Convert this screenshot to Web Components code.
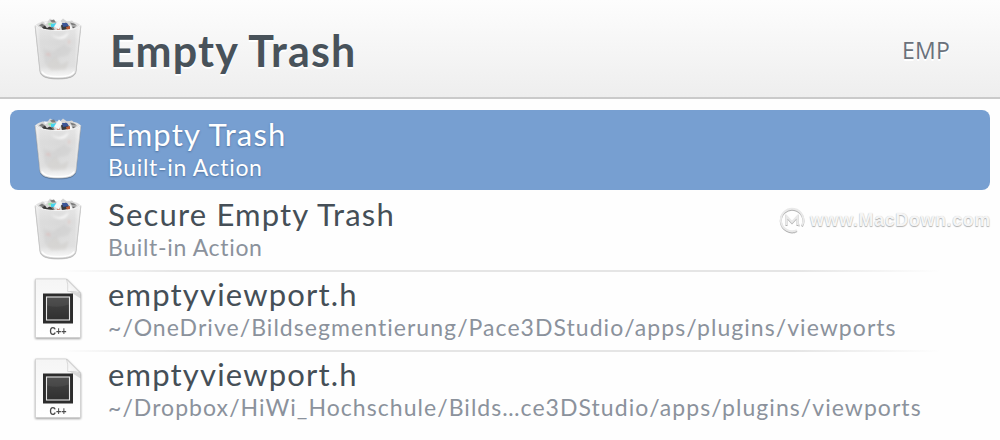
<!DOCTYPE html>
<html lang="en">
<head>
<meta charset="utf-8">
<title>Launcher</title>
<style>
    body {
        margin: 0;
        background: #fefefe;
        font-family: Lato, "Open Sans", sans-serif;
    }
</style>
</head>
<body>
<launcher-window></launcher-window>

<script>
class TrashIcon extends HTMLElement {
    constructor() {
        super();
        this.attachShadow({ mode: 'open' });
    }

    connectedCallback() {
        this.shadowRoot.innerHTML = `
        <style>
            :host { display: block; width: 50px; height: 64px; }
            svg { display: block; filter: drop-shadow(0 1px .7px rgba(0, 0, 0, .25)); }
        </style>
        <svg width="50" height="64" viewBox="0 1.500 50 64">
            <defs>
                <linearGradient id="side" x1="0" x2="1" y1="0" y2="0">
                    <stop offset="0" stop-color="#f0f0f0"/>
                    <stop offset=".12" stop-color="#dcdcdc"/>
                    <stop offset=".5" stop-color="#d9d9d9"/>
                    <stop offset=".86" stop-color="#dddddd"/>
                    <stop offset="1" stop-color="#f2f2f2"/>
                </linearGradient>
                <linearGradient id="glow" x1="0" x2="0" y1="0" y2="1">
                    <stop offset="0" stop-color="#fff" stop-opacity=".3"/>
                    <stop offset=".3" stop-color="#fff" stop-opacity="0"/>
                    <stop offset=".78" stop-color="#fff" stop-opacity=".1"/>
                    <stop offset="1" stop-color="#fff" stop-opacity=".9"/>
                </linearGradient>
                <filter id="soft"><feGaussianBlur stdDeviation="1.1"/></filter>
                <filter id="smudge"><feGaussianBlur stdDeviation=".35"/></filter>
            </defs>
            <!-- crumpled paper -->
            <path d="M2.200 9Q5 5.500 12 5h26q7 .5 9.800 4-3 5-22.800 5T2.200 9z" fill="#e2e2e2"/>
            <g filter="url(#smudge)">
                <path d="M5 9 9 5l5 1 3-4 5 3 4 1 4-4 4 3 5-1 3 3 2 3-3 4-8 2H13L6 12z" fill="#d6d6d6"/>
                <path d="m6 9 3-2 3 2-2 2zM17 4l4-1 2 3-4 0zM15 11l5-1 2 4-6 0zM37 6l4 1 3 2-5 0z" fill="#7c7c7c"/>
                <path d="m9 11 3-2 3 4-4 0zM13 12l4-2 4 4h-7zM28 9l5-3 4 6-8 2z" fill="#3a3a3a"/>
                <path d="m15 7 4-1 1 3-4 0z" fill="#9ae2a4"/>
                <path d="m18 7.500 6-1-2 4h-4z" fill="#45d3ee"/>
                <path d="m29 6.500 5 0 2 3-6 1z" fill="#3b5496"/>
                <path d="m25 9 1-2 1 6-3 1z" fill="#cc7458"/>
                <path d="m33 10.500 4-1 1 3-4 1z" fill="#bb5c38"/>
                <path d="m21 10 5-7 3 3-3 7zM11 5l4 1-3 2zM37 8l3 4-3 1z" fill="#f6f6f6"/>
                <path d="m39 10 4 0-3 2z" fill="#606060"/>
            </g>
            <!-- basket -->
            <path d="M2.200 9C5 12.500 14 14 25 14s20-1.500 22.800-5L43 54c-.6 5-6.500 7.500-18 7.500S7.600 59 7 54z" fill="url(#side)"/>
            <path d="M2.200 9C5 12.500 14 14 25 14s20-1.500 22.800-5L43 54c-.6 5-6.500 7.500-18 7.500S7.600 59 7 54z" fill="url(#glow)"/>
            <g filter="url(#soft)">
                <path d="M18 18c7 4 13 3 18-3-2 9-11 10-18 3z" fill="#fff" opacity=".75"/>
                <path d="m10 32 10 3 11-7 8 4-4 7-11 2-12 7z" fill="#c4c4c4" opacity=".3"/>
                <path d="m13 48 10-8 5 8 8-4-3 9-15 1z" fill="#cbc7c2" opacity=".4"/>
                <path d="m12 38 4-2 2 4z" fill="#e5aaa5" opacity=".4"/>
                <path d="m35 23 3 2-3 3z" fill="#e8b0aa" opacity=".35"/>
            </g>
            <path d="M2.800 8.500C5 12.500 14 14 25 14s20-1.500 22.200-5.500" fill="none" stroke="#f6f6f6" stroke-width="1"/>
            <path d="M9 55c1.500 4 7 5.400 16 5.400S39.500 59 41 55" fill="none" stroke="#fff" stroke-width="1.600" opacity=".9"/>
            <path d="M2.200 9 7 54c.6 5 6.500 7.500 18 7.500S42.400 59 43 54L47.800 9" fill="none" stroke="#c2c2c2" stroke-width=".7"/>
        </svg>
        `;
    }
}

class HeaderFileIcon extends HTMLElement {
    constructor() {
        super();
        this.attachShadow({ mode: 'open' });
    }

    connectedCallback() {
        this.shadowRoot.innerHTML = `
        <style>
            :host { display: block; width: 50px; height: 64px; }
            svg { display: block; filter: drop-shadow(0 1px 1px rgba(0, 0, 0, .4)); }
            text { font: bold 10px "Liberation Sans", sans-serif; fill: #4c4c4c; }
        </style>
        <svg width="50" height="64" viewBox="0 1.500 50 64">
            <defs>
                <linearGradient id="sheet" x1="0" x2="0" y1="0" y2="1">
                    <stop offset="0" stop-color="#f5f5f5"/>
                    <stop offset="1" stop-color="#fff"/>
                </linearGradient>
                <linearGradient id="fold" x1="0" x2="1" y1="1" y2="0">
                    <stop offset="0" stop-color="#fff"/>
                    <stop offset=".45" stop-color="#f2f2f2"/>
                    <stop offset=".6" stop-color="#bdbdbd"/>
                </linearGradient>
                <linearGradient id="panel" x1="0" x2="0" y1="0" y2="1">
                    <stop offset="0" stop-color="#454545"/>
                    <stop offset="1" stop-color="#303030"/>
                </linearGradient>
            </defs>
            <path d="M2.500 2.500h31l14 14v44.500h-45z" fill="url(#sheet)" stroke="#cfcfcf" stroke-width=".7"/>
            <path d="m35 14 12.500 3v5z" fill="#000" opacity=".12"/>
            <rect x="10" y="17" width="30" height="30" fill="#2c2c2c"/>
            <rect x="13.500" y="20.500" width="23" height="23" fill="url(#panel)" stroke="#e6e6e6" stroke-width="1.100"/>
            <path d="M14 21h22v7q-11 4-22 1z" fill="#fff" opacity=".06"/>
            <path d="M33.500 2.500q1.800 5 1.200 12.500 7-.8 12.800 1.500z" fill="url(#fold)" stroke="#bcbcbc" stroke-width=".5"/>
            <text x="16.500" y="58.500" textLength="17" lengthAdjust="spacingAndGlyphs">C++</text>
        </svg>
        `;
    }
}

class SearchHeader extends HTMLElement {
    constructor() {
        super();
        this.attachShadow({ mode: 'open' });
    }

    connectedCallback() {
        this.shadowRoot.innerHTML = `
        <style>
            :host {
                display: flex;
                align-items: center;
                box-sizing: border-box;
                height: 99px;
                padding: 3px 50px 0 33px;
                border-bottom: 2px solid #cacaca;
                background: linear-gradient(#fdfdfd, #eeeeee);
                color: #48525a;
                text-shadow: 0 2px 0 #fff;
            }
            .title {
                flex: 1;
                margin-left: 27px;
                padding-top: 2px;
                font-size: 43px;
                font-weight: 700;
                line-height: 60px;
                letter-spacing: 1.200px;
            }
            .query {
                padding-bottom: 1px;
                font: 400 23px/30px "Open Sans", sans-serif;
                letter-spacing: .2px;
                color: #6a717b;
            }
        </style>
        <slot name="icon"></slot>
        <div class="title"><slot></slot></div>
        <div class="query">${this.getAttribute('query')}</div>
        `;
    }
}

class ResultRow extends HTMLElement {
    constructor() {
        super();
        this.attachShadow({ mode: 'open' });
    }

    connectedCallback() {
        this.shadowRoot.innerHTML = `
        <style>
            :host {
                display: flex;
                align-items: center;
                box-sizing: border-box;
                height: 80px;
                padding-left: 23px;
                border-radius: 8px;
                color: #454f57;
                --sub: #8b929c;
            }
            :host([selected]) {
                background: #779fd1;
                color: #fff;
                --sub: #fff;
                text-shadow: 0 1px 2px rgba(40, 70, 110, .5);
            }
            /* hairline fades out on both ends */
            :host([divided]) {
                background: linear-gradient(90deg, transparent 5%, #e5e5e5 17%, #e5e5e5 80%, transparent 95%) top / 100% 2px no-repeat;
                --sub-gap: 1.050px;
            }
            .text {
                margin-left: 25px;
                padding-bottom: 2px;
                white-space: nowrap;
            }
            .title {
                font-size: 31px;
                line-height: 35px;
                letter-spacing: 1.180px;
            }
            .sub {
                color: var(--sub);
                font-size: 23px;
                line-height: 30px;
                letter-spacing: var(--sub-gap, .67px);
            }
        </style>
        <slot name="icon"></slot>
        <div class="text">
            <div class="title"><slot></slot></div>
            <div class="sub"><slot name="sub"></slot></div>
        </div>
        `;
    }
}

class SiteMark extends HTMLElement {
    constructor() {
        super();
        this.attachShadow({ mode: 'open' });
    }

    connectedCallback() {
        this.shadowRoot.innerHTML = `
        <style>
            :host {
                display: flex;
                align-items: center;
                gap: 5px;
                color: #f5f5f5;
                font: bold 18px/26px "Liberation Sans", sans-serif;
                letter-spacing: .57px;
                text-shadow: 0 1px 1px #b2b2b2, 0 0 1px #d0d0d0;
            }
            svg { filter: drop-shadow(0 1px .6px #b0b0b0); }
        </style>
        <svg width="26" height="26" viewBox="0 0 26 26" fill="none" stroke="#e9e9e9" stroke-width="2">
            <path d="M18 23.200A11.300 11.300 0 1 1 23 18.500"/>
            <path d="M7.500 18V9l5.500 6 5.500-6v9"/>
            <path d="M15 24.200h.8M19.500 17.500h1"/>
        </svg>
        <span>www.MacDown.com</span>
        `;
    }
}

class LauncherWindow extends HTMLElement {
    constructor() {
        super();
        this.attachShadow({ mode: 'open' });
    }

    connectedCallback() {
        this.shadowRoot.innerHTML = `
        <style>
            :host {
                display: block;
                position: relative;
                height: 440px;
                overflow: hidden;
            }
            .results { padding: 11px 10px 0; }
            /* stamped over the list */
            site-mark {
                position: absolute;
                top: 207px;
                left: 779px;
            }
        </style>
        <search-header query="EMP">
            <trash-icon slot="icon"></trash-icon>Empty Trash
        </search-header>
        <div class="results">
            <result-row selected>
                <trash-icon slot="icon"></trash-icon>Empty Trash
                <span slot="sub">Built-in Action</span>
            </result-row>
            <result-row>
                <trash-icon slot="icon"></trash-icon>Secure Empty Trash
                <span slot="sub">Built-in Action</span>
            </result-row>
            <result-row divided>
                <header-file-icon slot="icon"></header-file-icon>emptyviewport.h
                <span slot="sub">~/OneDrive/Bildsegmentierung/Pace3DStudio/apps/plugins/viewports</span>
            </result-row>
            <result-row divided>
                <header-file-icon slot="icon"></header-file-icon>emptyviewport.h
                <span slot="sub">~/Dropbox/HiWi_Hochschule/Bilds…ce3DStudio/apps/plugins/viewports</span>
            </result-row>
        </div>
        <site-mark></site-mark>
        `;
    }
}

customElements.define('trash-icon', TrashIcon);
customElements.define('header-file-icon', HeaderFileIcon);
customElements.define('search-header', SearchHeader);
customElements.define('result-row', ResultRow);
customElements.define('site-mark', SiteMark);
customElements.define('launcher-window', LauncherWindow);
</script>
</body>
</html>
